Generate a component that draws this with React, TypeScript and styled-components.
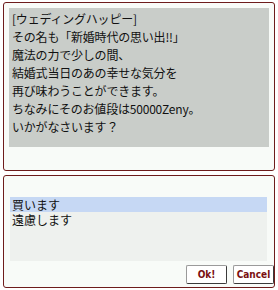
import React from "react";
import styled, { createGlobalStyle } from "styled-components";

const Global = createGlobalStyle`
  html, body { margin: 0; padding: 0; background: #ffffff; }
  body { width: 278px; height: 290px; overflow: hidden; }
  * { box-sizing: border-box; }
`;

const Page = styled.div`
  display: flex;
  flex-direction: column;
  gap: 4px;
  padding: 2px 3px 0 3px;
  width: 278px;
  font-family: "Noto Sans CJK JP", "Noto Sans", sans-serif;
`;

const Panel = styled.div<{ $h: number }>`
  height: ${(p) => p.$h}px;
  border: 1px solid #6e1c1c;
  border-radius: 3px;
  background: #f8fbf8;
  display: flex;
  flex-direction: column;
`;

const Message = styled.div`
  margin: 5px 5px 0 5px;
  height: 139px;
  background: #c9cdc9;
  padding: 2px 0 0 3px;
  font-size: 12px;
  line-height: 18px;
  color: #111;
  white-space: pre;
  letter-spacing: -0.2px;
`;

const List = styled.div`
  margin: 21px 7px 0 6px;
  height: 64px;
  background: #eef1ee;
  display: flex;
  flex-direction: column;
`;

const Item = styled.div<{ $sel?: boolean }>`
  height: 15px;
  line-height: 15px;
  font-size: 12px;
  padding-left: 2px;
  color: #111;
  overflow: hidden;
  background: ${(p) => (p.$sel ? "#c6d8f4" : "transparent")};
`;

const Buttons = styled.div`
  display: flex;
  justify-content: flex-end;
  gap: 6px;
  padding: 4px 0 0 0;
`;

const Button = styled.button<{ $w: number }>`
  width: ${(p) => p.$w}px;
  height: 19px;
  padding: 0 0 1px 0;
  background: #ffffff;
  border: 1px solid #9a9a9a;
  border-right-color: #3a3a3a;
  border-bottom-color: #3a3a3a;
  border-radius: 2px;
  font-family: "DejaVu Sans Condensed", "DejaVu Sans", sans-serif;
  font-weight: bold;
  font-size: 10px;
  letter-spacing: 0;
  color: #7a1010;
  display: flex;
  align-items: center;
  justify-content: center;
  white-space: nowrap;
`;

export default function App() {
  return (
    <>
      <Global />
      <Page>
        <Panel $h={169}>
          <Message>
            {"[ウェディングハッピー]\nその名も「新婚時代の思い出!!」\n魔法の力で少しの間、\n結婚式当日のあの幸せな気分を\n再び味わうことができます。\nちなみにそのお値段は50000Zeny。\nいかがなさいます？"}
          </Message>
        </Panel>
        <Panel $h={113}>
          <List>
            <Item $sel>買います</Item>
            <Item>遠慮します</Item>
          </List>
          <Buttons>
            <Button $w={41}>Ok!</Button>
            <Button $w={41}>Cancel</Button>
          </Buttons>
        </Panel>
      </Page>
    </>
  );
}
